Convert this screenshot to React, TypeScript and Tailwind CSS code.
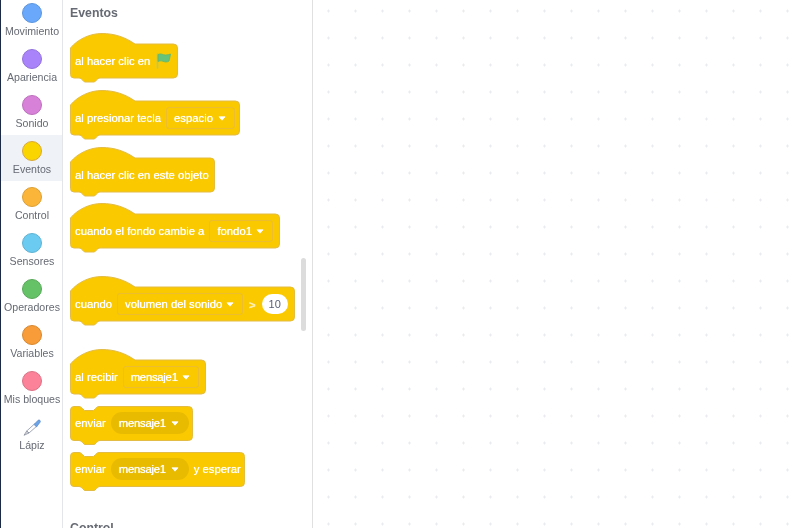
import { ReactNode } from 'react'

const categories = [
  { label: 'Movimiento', fill: 'bg-[#6aa8fb]', ring: 'border-[#5c95de]' },
  { label: 'Apariencia', fill: 'bg-[#a883fa]', ring: 'border-[#9373dc]' },
  { label: 'Sonido', fill: 'bg-[#d881d8]', ring: 'border-[#bd70bd]' },
  { label: 'Eventos', fill: 'bg-[#fbd500]', ring: 'border-[#d9a93a]', active: true },
  { label: 'Control', fill: 'bg-[#fbb63a]', ring: 'border-[#dc9f33]' },
  { label: 'Sensores', fill: 'bg-[#6ccbf0]', ring: 'border-[#5eb2d4]' },
  { label: 'Operadores', fill: 'bg-[#66c267]', ring: 'border-[#58a95a]' },
  { label: 'Variables', fill: 'bg-[#f79c38]', ring: 'border-[#d88830]' },
  { label: 'Mis bloques', fill: 'bg-[#fb8299]', ring: 'border-[#dc7286]' },
]

const bottomEdge = (w: number, bottom: number) =>
  `H${w - 4}a4 4 0 0 1 4 4V${bottom - 4}a4 4 0 0 1-4 4H30c-1.500 0-2.500 1-3.500 2l-2 2H14.500l-2-2c-1-1-2-2-3.500-2H4a3.500 3.500 0 0 1-3.500-3.500`

function hatPath(w: number) {
  return `M.5 15C8 6 20 .5 32 .5c12 0 23 3.500 33 10.500${bottomEdge(w - 0.5, 45)}Z`
}

function stackPath(w: number) {
  return `M.5 4a3.500 3.500 0 0 1 3.500-3.500H9c1.500 0 2.500 1 3.500 2l2 2h9l2-2c1-1 2-2 3.500-2${bottomEdge(w - 0.5, 34.5)}Z`
}

function Arrow() {
  return (
    <svg width="8" height="5" viewBox="0 0 8 5" className="shrink-0">
      <path d="M1 .8h6L4 4.200z" fill="#fff" stroke="#fff" strokeWidth="0.8" strokeLinejoin="round" />
    </svg>
  )
}

function Label({ children, className = '' }: { children: ReactNode; className?: string }) {
  return <span className={`whitespace-nowrap text-[11.3px] text-white [text-shadow:0_0_0.8px_#fff] ${className}`}>{children}</span>
}

function Field({ children, className, tight }: { children: string; className: string; tight?: boolean }) {
  return (
    <span className={`flex h-[22px] items-center justify-between rounded-[3px] border border-[#ecbd2e] pl-[7px] pr-2 ${className}`}>
      <Label className={tight ? 'tracking-[-0.25px]' : ''}>{children}</Label>
      <Arrow />
    </span>
  )
}

function Pill({ children }: { children: string }) {
  return (
    <span className="flex h-[22px] w-[78px] items-center justify-between rounded-full bg-[#e9bb00] pl-[8px] pr-[10px]">
      <Label className="tracking-[-0.25px]">{children}</Label>
      <Arrow />
    </span>
  )
}

function Flag() {
  return (
    <svg width="18" height="18" viewBox="0 0 18 18" className="shrink-0">
      <path d="M2.500 2v14" stroke="#bcc65c" strokeWidth="1.600" strokeLinecap="round" />
      <path d="M3 2.500c3-1.500 5 .5 7.500.5 2 0 3.500-.5 5-1-.5 3-1 5-1.500 7-2 1.500-4 1-6 .3-2-.7-3.500-.5-5 .2z" fill="#67c27a" stroke="#62b86a" strokeWidth="0.800" strokeLinejoin="round" />
    </svg>
  )
}

function Block({
  kind,
  width,
  className,
  children,
}: {
  kind: 'hat' | 'stack'
  width: number
  className: string
  children: ReactNode
}) {
  const hat = kind === 'hat'
  return (
    <div className={`relative shrink-0 ${hat ? 'h-[45px] pt-[11px]' : 'h-[34px]'} ${className}`}>
      <svg width={width + 1} height={hat ? 51 : 40} className="absolute left-0 top-0">
        <path d={hat ? hatPath(width) : stackPath(width)} fill="#fac900" stroke="#e3bc45" strokeWidth="1" />
      </svg>
      <div className="relative flex h-[34px] items-center gap-[5px] pl-[5px]">{children}</div>
    </div>
  )
}

function Pencil() {
  return (
    <svg width="18" height="17" viewBox="0 0 18 17">
      <path d="M12 4.500l2.300 2.200-8.300 7.300-2.300-2z" fill="#fff" stroke="#8b93a6" strokeWidth="0.800" strokeLinejoin="round" />
      <path d="M11 5.500l4-4.200c.7-.5 1.500-.4 2 .1.500.6.500 1.400 0 2l-3.500 4.500z" fill="#6aa3e8" stroke="#5d86bd" strokeWidth="0.600" strokeLinejoin="round" />
      <path d="M3.700 12L1 16.300 6 14z" fill="#d4d6dc" stroke="#71778a" strokeWidth="0.600" strokeLinejoin="round" />
    </svg>
  )
}

export default function App() {
  return (
    <div className="flex h-[528px] w-[802px] overflow-hidden bg-white font-['Liberation_Sans',Arial,sans-serif] text-[#666a73] blur-[0.35px]">
      <div className="flex w-[63px] shrink-0 flex-col border-l border-r border-l-[#1d2a45] border-r-[#e3e5e9]">
        <div className="-mt-[3px]">
          {categories.map((c) => (
            <div key={c.label} className={`flex h-[46px] flex-col items-center pl-[1px] pt-[6px] ${c.active ? 'bg-[#eff2f7]' : ''}`}>
              <span className={`h-[20px] w-[20px] rounded-full border ${c.fill} ${c.ring}`} />
              <span className="mt-[1px] whitespace-nowrap text-[10.6px] leading-[14px]">{c.label}</span>
            </div>
          ))}
          <div className="flex h-[46px] flex-col items-center pl-[1px] pt-[8px]">
            <Pencil />
            <span className="mt-[2px] text-[10.6px] leading-[14px]">Lápiz</span>
          </div>
        </div>
      </div>

      <div className="relative flex w-[250px] shrink-0 flex-col border-r border-[#e0e0e0] pl-[7px]">
        <div className="mt-[5px] h-[16px] text-[12.3px] font-bold leading-[16px]">Eventos</div>
        <Block kind="hat" width={108} className="mt-[12px] w-[108px]">
          <Label>al hacer clic en</Label>
          <Flag />
        </Block>
        <Block kind="hat" width={170} className="mt-[12px] w-[170px]">
          <Label>al presionar tecla</Label>
          <Field className="w-[69px]">espacio</Field>
        </Block>
        <Block kind="hat" width={145} className="mt-[12px] w-[145px]">
          <Label>al hacer clic en este objeto</Label>
        </Block>
        <Block kind="hat" width={210} className="mt-[11px] w-[210px]">
          <Label>cuando el fondo cambie a</Label>
          <Field className="w-[64px]">fondo1</Field>
        </Block>
        <Block kind="hat" width={225} className="mt-[28px] w-[225px]">
          <Label>cuando</Label>
          <Field className="w-[126px]">volumen del sonido</Field>
          <span className="ml-[1px] mr-[1px]"><Label className="font-bold opacity-70">&gt;</Label></span>
          <span className="flex h-[20px] w-[26px] items-center justify-center rounded-full bg-white text-[11px] text-[#575e75]">10</span>
        </Block>
        <Block kind="hat" width={136} className="mt-[28px] w-[136px]">
          <Label>al recibir</Label>
          <Field className="w-[76px]" tight>mensaje1</Field>
        </Block>
        <Block kind="stack" width={123} className="mt-[12px] w-[123px]">
          <Label>enviar</Label>
          <Pill>mensaje1</Pill>
        </Block>
        <Block kind="stack" width={175} className="mt-[12px] w-[175px]">
          <Label>enviar</Label>
          <Pill>mensaje1</Pill>
          <Label>y esperar</Label>
        </Block>
        <div className="mt-[34px] text-[12.3px] font-bold leading-[16px]">Control</div>
        <div className="absolute left-[238px] top-[258px] h-[73px] w-[5px] rounded-full bg-[#dcdcdc]" />
      </div>

      <div className="flex-1 bg-white bg-[radial-gradient(circle,#e9ebee_1px,transparent_1.2px)] bg-[size:27px_27px] bg-[position:2px_-2.500px]" />
    </div>
  )
}
